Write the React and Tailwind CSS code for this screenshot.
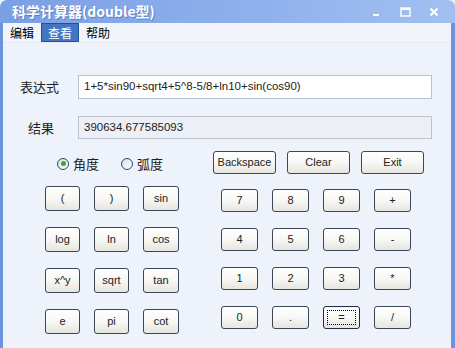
import React from "react";

const cjk = { fontFamily: '"Noto Sans CJK SC", "Liberation Sans", sans-serif' };
const latin = { fontFamily: '"Liberation Sans", "DejaVu Sans", sans-serif' };

function Btn({ label, className = "", focus = false }) {
  return (
    <button
      className={`flex items-center justify-center rounded-[3px] border bg-gradient-to-b from-white via-[#f7f7f4] to-[#e6e5df] text-[11px] text-[#222] ${
        focus ? "border-[#1f2d44] p-[3px]" : "border-[#3b4656]"
      } ${className}`}
      style={latin}
    >
      {focus ? (
        <span className="flex h-full w-full items-center justify-center border border-dotted border-black">
          {label}
        </span>
      ) : (
        label
      )}
    </button>
  );
}

function Radio({ checked, label }) {
  return (
    <div className="flex items-center gap-[4px]">
      <span className="flex h-[12px] w-[12px] items-center justify-center rounded-full border border-[#1c5180] bg-gradient-to-br from-[#dcdcd6] to-white">
        {checked && <span className="h-[5px] w-[5px] rounded-full bg-[#3fa53a]" />}
      </span>
      <span className="text-[13px] text-[#222]" style={cjk}>
        {label}
      </span>
    </div>
  );
}

export default function App() {
  const leftKeys = ["(", ")", "sin", "log", "ln", "cos", "x^y", "sqrt", "tan", "e", "pi", "cot"];
  const digitKeys = ["7", "8", "9", "+", "4", "5", "6", "-", "1", "2", "3", "*", "0", ".", "=", "/"];

  return (
    <div className="flex h-[348px] w-[455px] flex-col overflow-hidden bg-[#eef2fa]">
      {/* title bar */}
      <div className="flex h-[23px] shrink-0 items-center rounded-t-[7px] bg-gradient-to-r from-[#7b9fe5] via-[#8cafeb] to-[#a2bff1] pl-[12px] pr-[16px]">
        <span className="text-[14px] font-bold text-white [text-shadow:1px_1px_0_#5c7fc0]" style={cjk}>
          科学计算器(double型)
        </span>
        <div className="ml-auto flex items-center gap-[18px]">
          <svg width="10" height="10" viewBox="0 0 10 10">
            <rect x="1" y="7" width="6" height="2" fill="white" />
          </svg>
          <svg width="11" height="10" viewBox="0 0 11 10">
            <rect x="1" y="1" width="9" height="8" fill="none" stroke="white" strokeWidth="1.4" />
            <rect x="1" y="1" width="9" height="2" fill="white" />
          </svg>
          <svg width="10" height="10" viewBox="0 0 10 10">
            <path d="M1.5 1.5 L8.5 8.5 M8.5 1.5 L1.5 8.5" stroke="white" strokeWidth="2.2" />
          </svg>
        </div>
      </div>

      <div className="flex flex-1">
        <div className="w-[3px] bg-[#6d93dc]" />
        <div className="flex flex-1 flex-col">
          {/* menu */}
          <div className="flex h-[20px] items-center border-b border-[#e4e9f3] bg-[#f1f4fb] pl-[7px] text-[12px] text-black" style={cjk}>
            <span>编辑</span>
            <span className="ml-[7px] flex h-[19px] items-center border border-[#214f98] bg-[#4275c4] px-[6px] text-white">查看</span>
            <span className="ml-[7px]">帮助</span>
          </div>

          {/* expression */}
          <div className="mt-[32px] flex items-center">
            <span className="ml-[17px] w-[58px] text-[13px] text-[#222]" style={cjk}>
              表达式
            </span>
            <div className="flex h-[24px] w-[354px] items-center border border-[#b9c1cf] bg-white pl-[5px] text-[11.5px] text-[#222]" style={latin}>
              1+5*sin90+sqrt4+5^8-5/8+ln10+sin(cos90)
            </div>
          </div>

          {/* result */}
          <div className="mt-[17px] flex items-center">
            <span className="ml-[25px] w-[50px] text-[13px] text-[#222]" style={cjk}>
              结果
            </span>
            <div className="flex h-[23px] w-[354px] items-center border border-[#bcc3cf] bg-[#eceff5] pl-[5px] text-[11.5px] text-[#222]" style={latin}>
              390634.677585093
            </div>
          </div>

          {/* keypad */}
          <div className="mt-[12px] flex">
            <div className="ml-[42px] flex flex-col">
              <div className="mt-[3px] ml-[12px] flex gap-[22px]">
                <Radio checked label="角度" />
                <Radio label="弧度" />
              </div>
              <div className="mt-[12px] grid grid-cols-[35px_35px_36px] gap-x-[14px] gap-y-[16px]">
                {leftKeys.map((k) => (
                  <Btn key={k} label={k} className="h-[25px]" />
                ))}
              </div>
            </div>

            <div className="ml-[34px] flex flex-col">
              <div className="flex gap-[11px]">
                <Btn label="Backspace" className="h-[23px] w-[63px]" />
                <Btn label="Clear" className="h-[23px] w-[63px]" />
                <Btn label="Exit" className="h-[23px] w-[63px]" />
              </div>
              <div className="mt-[15px] ml-[8px] grid grid-cols-[37px_37px_37px_37px] gap-x-[14px] gap-y-[16px]">
                {digitKeys.map((k) => (
                  <Btn key={k} label={k} focus={k === "="} className="h-[23px]" />
                ))}
              </div>
            </div>
          </div>
        </div>
        <div className="w-[4px] bg-[#6d93dc]" />
      </div>
    </div>
  );
}
